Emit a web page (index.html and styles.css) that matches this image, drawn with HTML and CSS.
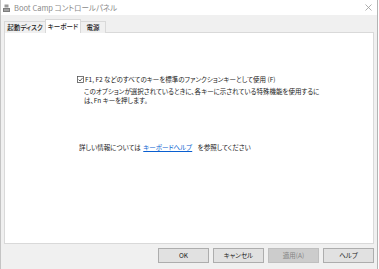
FILE: index.html
```html
<!DOCTYPE html>
<html lang="ja">
<head>
<meta charset="utf-8">
<link rel="stylesheet" href="styles.css">
</head>
<body>
<div class="window">
  <div class="titlebar">
    <svg class="app-icon" width="7" height="8" viewBox="0 0 7 8">
      <rect x="1.5" y="0.5" width="4" height="3" fill="#9a9a9a"/>
      <rect x="0" y="4" width="7" height="4" fill="#7d7d7d"/>
      <rect x="1" y="5.5" width="5" height="1" fill="#c8c8c8"/>
    </svg>
    <span class="title">Boot Camp コントロールパネル</span>
    <svg class="close" width="7" height="7" viewBox="0 0 7 7">
      <path d="M0.5 0.5 L6.5 6.5 M6.5 0.5 L0.5 6.5" stroke="#9a9a9a" stroke-width="0.8" fill="none"/>
    </svg>
  </div>
  <div class="client">
    <div class="tabs">
      <div class="tab first">起動ディスク</div>
      <div class="tab active">キーボード</div>
      <div class="tab last">電源</div>
    </div>
    <div class="panel">
      <div class="option">
        <span class="checkbox">
          <svg width="7" height="7" viewBox="0 0 7 7">
            <rect x="0.5" y="0.5" width="6" height="6" fill="#fff" stroke="#555" stroke-width="0.8"/>
            <path d="M1.6 3.6 L3 5 L5.6 1.9" stroke="#333" stroke-width="0.8" fill="none"/>
          </svg>
        </span>
        <span class="label">F1, F2 などのすべてのキーを標準のファンクションキーとして使用 (F)</span>
      </div>
      <p class="desc">このオプションが選択されているときに、各キーに示されている特殊機能を使用するに<br>は、Fn キーを押します。</p>
      <p class="info">詳しい情報については <a class="link" href="#">キーボードヘルプ</a> <span class="rest">を参照してください</span></p>
    </div>
    <div class="buttons">
      <button class="btn">OK</button>
      <button class="btn">キャンセル</button>
      <button class="btn disabled">適用(A)</button>
      <button class="btn">ヘルプ</button>
    </div>
  </div>
</div>
</body>
</html>
```
FILE: styles.css
```css
* { box-sizing: border-box; }
html, body {
  margin: 0;
  padding: 0;
  background: #ffffff;
}
body {
  font-family: "Noto Sans CJK JP", "Noto Sans", sans-serif;
  font-feature-settings: "palt";
  color: #1a1a1a;
}
.window {
  width: 378px;
  height: 269px;
  border-left: 1px solid #c4c4c4;
  border-right: 1px solid #b4b4b4;
  display: flex;
  flex-direction: column;
}
.titlebar {
  height: 15px;
  background: #ffffff;
  display: flex;
  align-items: center;
  padding-left: 2px;
  padding-right: 5px;
}
.app-icon { margin-top: 1px; }
.title {
  margin-left: 4px;
  font-size: 7.5px;
  color: #8a8a8a;
  line-height: 1;
}
.close { margin-left: auto; }
.client {
  flex: 1;
  background: #f0f0f0;
  padding: 4px 3px 0 3px;
  display: flex;
  flex-direction: column;
}
.tabs {
  display: flex;
  align-items: flex-end;
  height: 14px;
  position: relative;
  z-index: 1;
  margin-bottom: -1px;
}
.tab {
  height: 12px;
  padding: 0;
  border: 1px solid #d9d9d9;
  border-bottom: none;
  background: #f0f0f0;
  font-size: 6.5px;
  line-height: 11px;
  font-weight: 500;
  color: #1a1a1a;
  white-space: nowrap;
  text-align: center;
}
.tab.first { width: 42px; }
.tab.active {
  height: 14px;
  width: 36px;
  background: #ffffff;
  line-height: 13px;
  margin-left: -1px;
  margin-right: -1px;
  position: relative;
}
.tab.last { width: 26px; }
.panel {
  height: 212px;
  background: #ffffff;
  border: 1px solid #d9d9d9;
  padding: 42px 0 0 72px;
  font-size: 6.5px;
}
.option {
  display: flex;
  align-items: center;
  height: 8px;
}
.checkbox { width: 7px; height: 7px; display: block; }
.checkbox svg { display: block; }
.label { margin-left: 1px; line-height: 8px; }
.desc {
  margin: 4px 0 0 7px;
  line-height: 9.4px;
}
.info {
  margin: 37px 0 0 2px;
  line-height: 8px;
}
.link {
  color: #0a5fd0;
  text-decoration: underline;
  margin: 0 1px;
}
.rest { margin-left: 3px; }
.buttons {
  display: flex;
  justify-content: flex-end;
  gap: 4px;
  margin-top: 4px;
}
.btn {
  width: 51px;
  height: 15px;
  padding: 0;
  background: #e1e1e1;
  border: 1px solid #adadad;
  font-family: "Noto Sans CJK JP", "Noto Sans", sans-serif;
  font-feature-settings: "palt";
  font-size: 6.5px;
  color: #1a1a1a;
  line-height: 13px;
}
.btn.disabled {
  background: #cccccc;
  border-color: #bfbfbf;
  color: #838383;
}
```
